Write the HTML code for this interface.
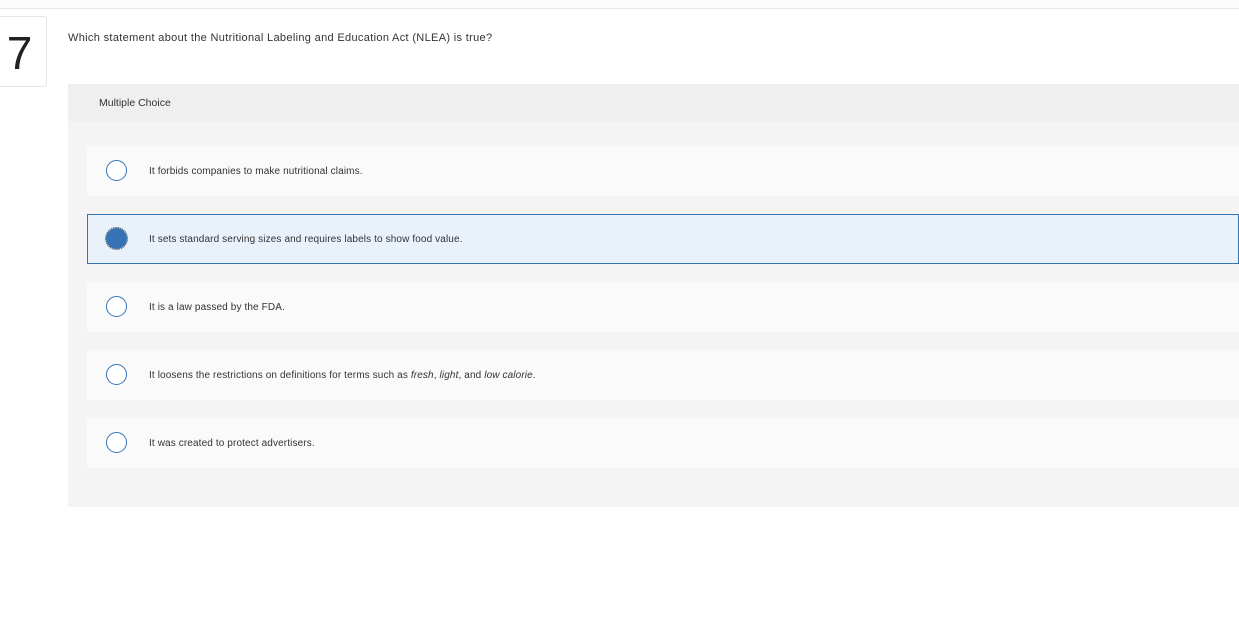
<!DOCTYPE html>
<html><head><style>
body{margin:0;width:1239px;height:637px;background:#fff;font-family:"Liberation Sans",sans-serif;position:relative;overflow:hidden;color:#333}
.top{position:absolute;left:0;top:0;width:1239px;height:8px;border-bottom:1px solid #e8e8e8;background:#fcfcfc}
.num{position:absolute;left:-8px;top:16px;width:53px;height:69px;border:1px solid #e6e6e6;border-radius:3px;font-size:46px;line-height:72px;text-align:center;color:#222;font-weight:300}
.q{position:absolute;left:68px;top:32px;font-size:11px;letter-spacing:0.33px;color:#333}
.panel{position:absolute;left:68px;top:84px;width:1171px;height:423px;background:#f4f4f4}
.hdr{position:absolute;left:0;top:0;width:100%;height:37px;background:#efefef}
.hdr span{position:absolute;left:31px;top:13px;font-size:10.5px;color:#333}
.opt{position:absolute;left:19px;width:1152px;height:50px;background:#fafafa;box-sizing:border-box}
.opt.sel{background:#e9f1fa;border:1px solid #3673b5}
.r{position:absolute;left:19px;top:14px;width:19px;height:19px;border:1.5px solid #3673b5;border-radius:50%;background:#fff}
.sel .r{background:#3673b5;left:18px;top:13px;outline:1px dotted #333;outline-offset:0}
.t{position:absolute;left:62px;top:20px;font-size:10px;letter-spacing:0.12px;color:#333;white-space:nowrap}
.sel .t{left:61px;top:19px}
</style></head><body>
<div class="top"></div>
<div class="num">7</div>
<div class="q">Which statement about the Nutritional Labeling and Education Act (NLEA) is true?</div>
<div class="panel">
<div class="hdr"><span>Multiple Choice</span></div>
<div class="opt" style="top:62px"><div class="r"></div><div class="t">It forbids companies to make nutritional claims.</div></div>
<div class="opt sel" style="top:130px"><div class="r"></div><div class="t">It sets standard serving sizes and requires labels to show food value.</div></div>
<div class="opt" style="top:198px"><div class="r"></div><div class="t">It is a law passed by the FDA.</div></div>
<div class="opt" style="top:266px"><div class="r"></div><div class="t">It loosens the restrictions on definitions for terms such as <i>fresh</i>, <i>light</i>, and <i>low calorie</i>.</div></div>
<div class="opt" style="top:334px"><div class="r"></div><div class="t">It was created to protect advertisers.</div></div>
</div>
</body></html>
